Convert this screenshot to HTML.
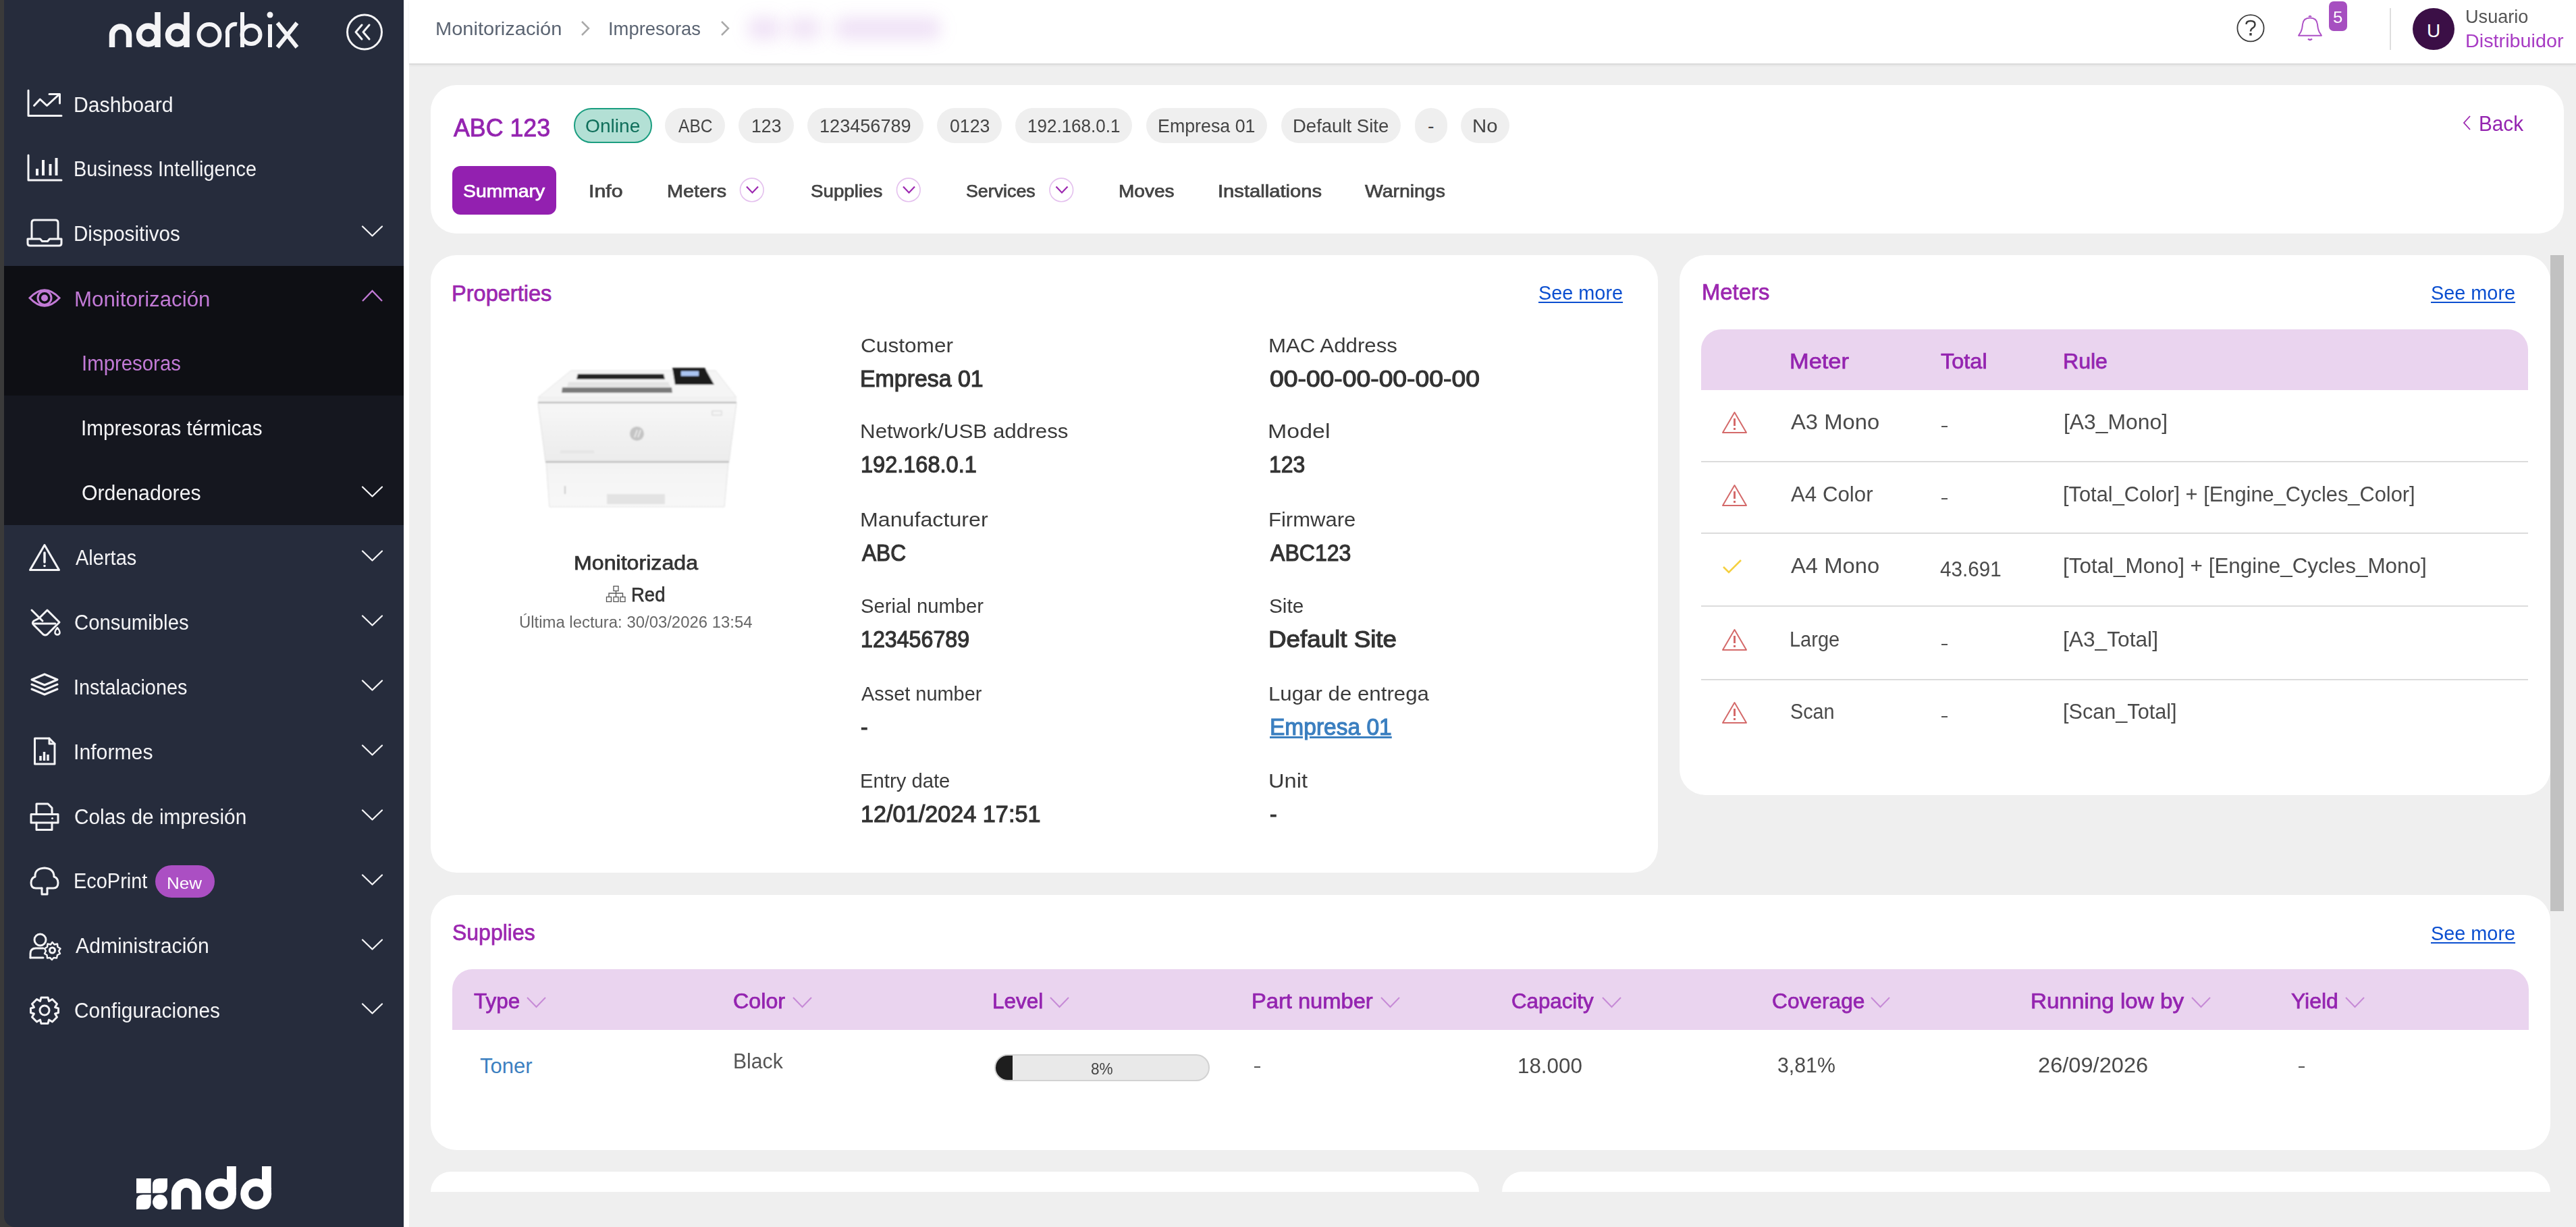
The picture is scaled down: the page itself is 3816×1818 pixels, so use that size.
<!DOCTYPE html>
<html><head><meta charset="utf-8"><style>
*{margin:0;padding:0;box-sizing:border-box}
html,body{width:3816px;height:1818px;overflow:hidden;background:#efefef;font-family:"Liberation Sans", sans-serif}
.t{position:absolute;white-space:nowrap;line-height:1.117;transform-origin:0 0}
.a{position:absolute}
</style></head><body>
<!-- sidebar -->
<div class="a" style="left:0;top:0;width:6px;height:1818px;background:#3a3a3a"></div>
<div class="a" style="left:0;top:1780px;width:40px;height:38px;background:#3a3a3a"></div>
<div class="a" style="left:6px;top:0;width:592px;height:1818px;background:#262c3c;border-bottom-left-radius:16px"></div>
<div class="a" style="left:6px;top:394px;width:592px;height:192px;background:#0e0f14"></div>
<div class="a" style="left:6px;top:586px;width:592px;height:192px;background:#15171f"></div>
<div class="a" style="left:598px;top:0;width:8px;height:1818px;background:#ffffff"></div>
<div class="a" style="left:230px;top:1282px;width:88px;height:48px;background:#ab4fc3;border-radius:24px"></div>
<!-- header -->
<div class="a" style="left:606px;top:0;width:3210px;height:94px;background:#fff;box-shadow:0 1.5px 0 #d6d6d6,0 3px 4px rgba(0,0,0,0.06)"></div>
<div class="a" style="left:1108px;top:26px;width:48px;height:32px;background:rgba(160,80,200,0.17);filter:blur(12px);border-radius:12px"></div>
<div class="a" style="left:1167px;top:26px;width:49px;height:32px;background:rgba(160,80,200,0.16);filter:blur(12px);border-radius:12px"></div>
<div class="a" style="left:1237px;top:26px;width:156px;height:32px;background:rgba(160,80,200,0.17);filter:blur(12px);border-radius:12px"></div>
<div class="a" style="left:3450px;top:2px;width:27px;height:44px;background:#a64fc0;border-radius:7px"></div>
<div class="a" style="left:3540px;top:12px;width:2px;height:62px;background:#dedede"></div>
<div class="a" style="left:3574px;top:12px;width:62px;height:62px;background:#3b0f46;border-radius:50%"></div>
<!-- cards -->
<div class="a" style="left:638px;top:126px;width:3160px;height:220px;background:#fff;border-radius:38px"></div>
<div class="a" style="left:638px;top:378px;width:1818px;height:915px;background:#fff;border-radius:38px"></div>
<div class="a" style="left:2488px;top:378px;width:1290px;height:800px;background:#fff;border-radius:38px"></div>
<div class="a" style="left:638px;top:1326px;width:3140px;height:378px;background:#fff;border-radius:38px"></div>
<div class="a" style="left:638px;top:1736px;width:1553px;height:30px;background:#fff;border-radius:40px 40px 0 0"></div>
<div class="a" style="left:2225px;top:1736px;width:1553px;height:30px;background:#fff;border-radius:40px 40px 0 0"></div>
<div class="a" style="left:3778px;top:378px;width:20px;height:972px;background:#c1c1c1"></div>
<!-- header card pills -->
<div class="a" style="left:850px;top:160px;width:116px;height:52px;background:#b3e0d5;border:2px solid #1b9e80;border-radius:26px"></div>
<div class="a" style="left:985px;top:160px;width:89px;height:52px;background:#efefef;border-radius:26px"></div>
<div class="a" style="left:1094px;top:160px;width:82px;height:52px;background:#efefef;border-radius:26px"></div>
<div class="a" style="left:1196px;top:160px;width:172px;height:52px;background:#efefef;border-radius:26px"></div>
<div class="a" style="left:1388px;top:160px;width:96px;height:52px;background:#efefef;border-radius:26px"></div>
<div class="a" style="left:1504px;top:160px;width:173px;height:52px;background:#efefef;border-radius:26px"></div>
<div class="a" style="left:1698px;top:160px;width:179px;height:52px;background:#efefef;border-radius:26px"></div>
<div class="a" style="left:1898px;top:160px;width:177px;height:52px;background:#efefef;border-radius:26px"></div>
<div class="a" style="left:2096px;top:160px;width:48px;height:52px;background:#efefef;border-radius:26px"></div>
<div class="a" style="left:2164px;top:160px;width:72px;height:52px;background:#efefef;border-radius:26px"></div>
<div class="a" style="left:670px;top:246px;width:154px;height:72px;background:#9320b0;border-radius:12px"></div>
<!-- meters table -->
<div class="a" style="left:2520px;top:488px;width:1225px;height:90px;background:#ead4ef;border-radius:30px 30px 0 0"></div>
<div class="a" style="left:2520px;top:683px;width:1225px;height:2px;background:#dcdcdc"></div>
<div class="a" style="left:2520px;top:789px;width:1225px;height:2px;background:#dcdcdc"></div>
<div class="a" style="left:2520px;top:897px;width:1225px;height:2px;background:#dcdcdc"></div>
<div class="a" style="left:2520px;top:1006px;width:1225px;height:2px;background:#dcdcdc"></div>
<div class="a" style="left:2876px;top:631px;width:9px;height:2px;background:#555"></div>
<div class="a" style="left:2876px;top:738px;width:9px;height:2px;background:#555"></div>
<div class="a" style="left:2876px;top:953.5px;width:9px;height:2px;background:#555"></div>
<div class="a" style="left:2876px;top:1061px;width:9px;height:2px;background:#555"></div>
<div class="a" style="left:1858px;top:1579.5px;width:8.5px;height:2px;background:#555"></div>
<div class="a" style="left:3404.5px;top:1579.5px;width:9px;height:2px;background:#555"></div>
<!-- supplies table -->
<div class="a" style="left:670px;top:1436px;width:3076px;height:90px;background:#ead4ef;border-radius:30px 30px 0 0"></div>
<div class="a" style="left:1473px;top:1562px;width:319px;height:40px;background:#e9e9e9;border:2px solid #d2d2d2;border-radius:20px;overflow:hidden"><div style="position:absolute;left:-2px;top:-1px;width:27px;height:40px;background:#1e1e1e"></div></div>

<svg class="a" style="left:0;top:0" width="3816" height="1818" viewBox="0 0 3816 1818">
<g fill="none" stroke="#f4f4f6" stroke-width="3" stroke-linecap="round" stroke-linejoin="round">
 <!-- logo ndd (bold) -->
 <g stroke-width="8.5" stroke-linecap="butt">
  <path d="M166 70 V52 A12.5 12.5 0 0 1 191 52 V70"/>
  <circle cx="219.5" cy="52" r="13.5"/><path d="M233.5 18 V70"/>
  <circle cx="262.5" cy="52" r="13.5"/><path d="M276.5 18 V70"/>
 </g>
 <g stroke-width="6" stroke-linecap="butt">
  <circle cx="310" cy="51.5" r="15.5"/>
  <path d="M337 70 V50 A12 12 0 0 1 351 36"/>
  <path d="M359 18 V70"/><circle cx="372" cy="51.5" r="13.5"/>
  <path d="M400 36 V70"/>
  <path d="M411 34 L440 70 M440 34 L411 70"/>
 </g>
 <circle cx="400" cy="22" r="4.5" fill="#f4f4f6" stroke="none"/>
 <!-- collapse -->
 <circle cx="540" cy="47.5" r="25.5" stroke-width="3"/>
 <path d="M536 37 L527 47.5 L536 58 M547 37 L538 47.5 L547 58" stroke-width="3"/>
 <!-- dashboard -->
 <path d="M42 134 V171.5 H91"/>
 <path d="M50.5 156.5 L59.3 147 L69.5 156.5 L88 139.5"/>
 <path d="M73 139.5 H88.5 V153"/>
 <!-- BI -->
 <path d="M42 230 V267 H91"/>
 <path d="M55 250 V260 M64 237 V260 M74.5 243 V260 M83.5 234 V260" stroke-width="4" stroke-linecap="butt"/>
 <!-- laptop -->
 <path d="M47 353 V330 Q47 326 51 326 H82 Q86 326 86 330 V353"/>
 <path d="M41 354 H59.5 L62.5 357.5 H70.5 L73.5 354 H91 V360.5 Q91 364 87.5 364 H44.5 Q41 364 41 360.5 Z"/>
 <!-- chevrons down -->
 <path d="M537 335.5 L551.5 349.5 L566 335.5" stroke-width="2.3"/>
 <path d="M547 720 L560 733 L573 720" stroke-width="0"/>
 <path d="M537 721.5 L551.5 735.5 L566 721.5" stroke-width="2.3"/>
 <path d="M537 816.5 L551.5 830.5 L566 816.5" stroke-width="2.3"/>
 <path d="M537 912.5 L551.5 926.5 L566 912.5" stroke-width="2.3"/>
 <path d="M537 1008.5 L551.5 1022.5 L566 1008.5" stroke-width="2.3"/>
 <path d="M537 1104.5 L551.5 1118.5 L566 1104.5" stroke-width="2.3"/>
 <path d="M537 1200.5 L551.5 1214.5 L566 1200.5" stroke-width="2.3"/>
 <path d="M537 1296.5 L551.5 1310.5 L566 1296.5" stroke-width="2.3"/>
 <path d="M537 1392.5 L551.5 1406.5 L566 1392.5" stroke-width="2.3"/>
 <path d="M537 1487.5 L551.5 1501.5 L566 1487.5" stroke-width="2.3"/>
 <!-- alert -->
 <path d="M66 807.5 L87.5 844.5 H44.5 Z" stroke-width="3"/>
 <path d="M66 819 V833" stroke-width="3.5"/><circle cx="66" cy="838.5" r="1.8" fill="#f4f4f6" stroke="none"/>
 <!-- consumibles: tilted bucket -->
 <path d="M58 916 L70 904 L88 922 L70 940 Q67 942 64 940 L50 926 Q47 923 50 920 Z"/>
 <path d="M49 924 H82"/>
 <path d="M47 904 L63 920"/>
 <path d="M85 930 Q80 936 82 939 Q85 942 88 939 Q90 936 85 930 Z" stroke-width="2.5"/>
 <!-- layers -->
 <path d="M66 999 L85 1007 L66 1015 L47 1007 Z"/>
 <path d="M47 1014 L66 1022 L85 1014"/>
 <path d="M47 1021 L66 1029 L85 1021"/>
 <!-- informes doc -->
 <path d="M51.5 1094 H73 L81 1102 V1132 H51.5 Z"/>
 <path d="M73 1094 V1102 H81"/>
 <path d="M60 1127 V1120 M65.5 1127 V1114 M71 1127 V1118" stroke-width="3.5" stroke-linecap="butt"/>
 <!-- printer -->
 <path d="M54 1206 V1191 H71 L77 1197 V1206"/>
 <path d="M46 1206.5 H86 V1219 H46 Z"/>
 <path d="M54 1219 V1229.5 H77 V1219"/>
 <circle cx="77.5" cy="1212.5" r="1.6" fill="#f4f4f6" stroke="none"/>
 <!-- tree -->
 <path d="M62 1316 H53 Q46 1316 46 1308 Q46 1301 52 1299 Q51 1287 66 1286 Q80 1287 80 1299 Q86 1301 86 1308 Q86 1316 79 1316 H70"/>
 <path d="M62 1316 V1325 H70 V1316"/>
 <!-- admin -->
 <circle cx="59.5" cy="1392.5" r="8.5"/>
 <path d="M45 1419 V1413 Q45 1405 53 1405 H64"/>
 <path d="M45 1419 H64"/>
 <circle cx="77.5" cy="1408" r="4"/>
 <path d="M77.5 1396 L80.5 1399.5 L85 1398.5 L85.5 1403 L89.5 1405.5 L87 1409 L89 1413 L85 1415 L84 1419.5 L79.5 1419 L77 1422 L74 1419 L70 1419.5 L69.5 1415 L66 1413 L68 1409 L66 1405.5 L70 1403 L70.5 1398.5 L75 1399.5 Z" stroke-width="2.5"/>
 <!-- config gear -->
 <circle cx="66" cy="1497" r="7"/>
 <path d="M61 1478 H71 L72.5 1483.5 L77.5 1480.5 L84.5 1487.5 L81.5 1492.5 L86.5 1494 V1500.5 L81.5 1502 L84.5 1507 L77.5 1514 L72.5 1511 L71 1516.5 H61 L59.5 1511 L54.5 1514 L47.5 1507 L50.5 1502 L45.5 1500.5 V1494 L50.5 1492.5 L47.5 1487.5 L54.5 1480.5 L59.5 1483.5 Z" stroke-width="3"/>
</g>
<!-- eye -->
<g fill="none" stroke="#c27ad6" stroke-width="3">
 <path d="M44 441.5 Q66 418 88 441.5 Q66 465 44 441.5 Z"/>
 <circle cx="66" cy="441.5" r="10"/>
 <circle cx="66" cy="441.5" r="5" fill="#c27ad6" stroke="none"/>
 <path d="M537 446 L551.5 431 L566 446" stroke-width="2.3"/>
</g>
<!-- bottom ndd logo -->
<g fill="#fff">
 <rect x="202" y="1746" width="21.7" height="21.8"/>
 <path d="M226 1767.8 V1756 Q226 1746 236 1746 H248 V1757.8 Q248 1767.8 238 1767.8 Z"/>
 <path d="M202 1792 V1780 Q202 1770 212 1770 H223.7 V1782 Q223.7 1792 213.7 1792 Z"/>
 <circle cx="237" cy="1781" r="11"/>
 <path d="M254 1792 V1768 A22 22 0 0 1 298 1768 V1792 H284.3 V1768 A8.15 8.15 0 0 0 268 1768 V1792 Z"/>
 <rect x="336" y="1728" width="13.8" height="34"/><rect x="338.5" y="1760" width="11.3" height="10"/>
 <rect x="388" y="1728" width="13.8" height="34"/><rect x="390.5" y="1760" width="11.3" height="10"/>
</g>
<g fill="none" stroke="#fff" stroke-width="12">
 <circle cx="327" cy="1769" r="17"/>
 <circle cx="379.2" cy="1769" r="17"/>
</g>
<!-- header icons -->
<g fill="none" stroke="#3a3a3a" stroke-width="1.8">
 <circle cx="3334" cy="41.8" r="19.6"/>
 <path d="M3327.5 36 Q3327.5 31 3334 31 Q3340.5 31 3340.5 36 Q3340.5 39.5 3337 41.5 Q3334 43.5 3334 46.5" stroke-width="2.4"/>
</g>
<rect x="3332.3" y="49" width="3.4" height="3.6" fill="#3a3a3a"/>
<g fill="none" stroke="#ad4fc6" stroke-width="1.9" stroke-linejoin="round">
 <path d="M3405 52.8 H3439 L3435.5 47 Q3433.5 43 3433 36 Q3432 26.5 3422 26.5 Q3412 26.5 3411 36 Q3410.5 43 3408.5 47 Z"/>
 <path d="M3419 57.5 Q3422 60.5 3425 57.5" stroke-width="2.2"/>
 <path d="M3420 25 Q3422 22.5 3424 25"/>
</g>
<!-- breadcrumb chevrons -->
<g fill="none" stroke="#a9a9a9" stroke-width="2.5">
 <path d="M862 32 L872 42 L862 52"/>
 <path d="M1069 32 L1079 42 L1069 52"/>
</g>
<!-- tab chevron circles -->
<g fill="none" stroke="#e4c0ee" stroke-width="1.6">
 <circle cx="1113.8" cy="281.4" r="17.3"/>
 <circle cx="1345.8" cy="281.4" r="17.3"/>
 <circle cx="1572.3" cy="281.4" r="17.3"/>
</g>
<g fill="none" stroke="#9c27b0" stroke-width="2.2">
 <path d="M1106 276.5 L1114.5 285.5 L1123 276.5"/>
 <path d="M1338 276.5 L1346.5 285.5 L1355 276.5"/>
 <path d="M1564.5 276.5 L1573 285.5 L1581.5 276.5"/>
 <path d="M3659 172 L3650 182 L3659 192" stroke-width="1.8"/>
</g>
<!-- supplies header chevrons -->
<g fill="none" stroke="#c68ad6" stroke-width="2">
 <path d="M781 1478 L794.5 1492 L808 1478"/>
 <path d="M1175 1478 L1188.5 1492 L1202 1478"/>
 <path d="M1556 1478 L1569.5 1492 L1583 1478"/>
 <path d="M2046 1478 L2059.5 1492 L2073 1478"/>
 <path d="M2374 1478 L2387.5 1492 L2401 1478"/>
 <path d="M2772 1478 L2785.5 1492 L2799 1478"/>
 <path d="M3247 1478 L3260.5 1492 L3274 1478"/>
 <path d="M3475 1478 L3488.5 1492 L3502 1478"/>
</g>
<!-- meter row icons -->
<g fill="none" stroke="#d46a6a" stroke-width="2" stroke-linejoin="round">
 <path d="M2569.5 611 L2587 641 H2552 Z"/>
 <path d="M2569.5 719 L2587 749 H2552 Z"/>
 <path d="M2569.5 933 L2587 963 H2552 Z"/>
 <path d="M2569.5 1041 L2587 1071 H2552 Z"/>
</g>
<g fill="#d46a6a">
 <rect x="2568" y="620" width="3" height="11"/><rect x="2568" y="634" width="3" height="3"/>
 <rect x="2568" y="728" width="3" height="11"/><rect x="2568" y="742" width="3" height="3"/>
 <rect x="2568" y="942" width="3" height="11"/><rect x="2568" y="956" width="3" height="3"/>
 <rect x="2568" y="1050" width="3" height="11"/><rect x="2568" y="1064" width="3" height="3"/>
</g>
<path d="M2553 840 L2561 848 L2579 830" fill="none" stroke="#f5d040" stroke-width="2.6"/>

<!-- printer image -->
<defs><filter id="pb" x="-5%" y="-5%" width="110%" height="110%"><feGaussianBlur stdDeviation="0.9"/></filter>
<linearGradient id="pg1" x1="0" y1="0" x2="0" y2="1"><stop offset="0" stop-color="#f7f7f7"/><stop offset="1" stop-color="#ececec"/></linearGradient>
<linearGradient id="pg2" x1="0" y1="0" x2="0" y2="1"><stop offset="0" stop-color="#f3f3f3"/><stop offset="1" stop-color="#f8f8f8"/></linearGradient></defs>
<g filter="url(#pb)">
 <path d="M846 549 H1000 L1060 549 L1091 589 H797 Z" fill="#f5f5f5" stroke="#e2e2e2" stroke-width="1"/>
 <path d="M856 554 H983 L985 562 H854 Z" fill="#222"/>
 <path d="M842 566 H990 L993 573 H840 Z" fill="#e4e4e4"/>
 <path d="M833 574 H995 L996 582 H832 Z" fill="#7a7a7a"/>
 <path d="M996 545 H1044 L1058 570 H1000 Z" fill="#1a1a1a"/>
 <rect x="1009" y="550" width="26" height="7" fill="#aac4f2"/>
 <path d="M797 589 H1091 V597 H797 Z" fill="#f2f2f2"/>
 <path d="M797 596.5 H1091" stroke="#9a9a9a" stroke-width="1.6"/>
 <path d="M797 597.5 H1091 L1080 683 H808 Z" fill="url(#pg1)" stroke="#dedede" stroke-width="1"/>
 <path d="M808 684.5 H1080" stroke="#9a9a9a" stroke-width="1.6"/>
 <path d="M809 685.5 H1079 L1073 751 H814 Z" fill="url(#pg2)" stroke="#e0e0e0" stroke-width="1"/>
 <rect x="899" y="732" width="86" height="15" fill="#e3e3e3"/>
 <circle cx="943.5" cy="642.5" r="10.5" fill="#c4c4c4"/>
 <path d="M940 648 L944 637 M945 648 L949 637" stroke="#f2f2f2" stroke-width="1.6"/>
 <rect x="1055" y="609" width="14" height="6" fill="none" stroke="#d0d0d0" stroke-width="1"/>
 <rect x="830" y="667" width="50" height="5" fill="#e6e6e6"/>
 <rect x="836" y="720" width="2" height="12" fill="#c8c8c8"/>
</g>
<!-- network icon -->
<g fill="none" stroke="#555" stroke-width="1.3">
 <rect x="909" y="868.5" width="7" height="7"/>
 <path d="M912.5 875.5 V879 M902 885 V879 H922.5 V885 M912.5 879 V885"/>
 <rect x="898.5" y="884.5" width="7" height="7"/><rect x="909" y="884.5" width="7" height="7"/><rect x="919" y="884.5" width="7" height="7"/>
</g>
</svg>

<div class="t" id="sb0" style="left:109.0px;top:138.6px;font-size:31px;font-weight:400;color:#f4f4f6;transform:scaleX(0.9732);">Dashboard</div><div class="t" id="sb1" style="left:109.0px;top:234.2px;font-size:31px;font-weight:400;color:#f4f4f6;transform:scaleX(0.9308);">Business Intelligence</div><div class="t" id="sb2" style="left:109.0px;top:329.6px;font-size:31px;font-weight:400;color:#f4f4f6;transform:scaleX(0.9540);">Dispositivos</div><div class="t" id="sbmon" style="left:109.5px;top:426.6px;font-size:31px;font-weight:400;color:#c27ad6;transform:scaleX(1.0077);">Monitorización</div><div class="t" id="sbimp" style="left:120.7px;top:522.1px;font-size:31px;font-weight:400;color:#c27ad6;transform:scaleX(0.9477);">Impresoras</div><div class="t" id="sbimpt" style="left:120.0px;top:617.6px;font-size:31px;font-weight:400;color:#f4f4f6;transform:scaleX(0.9568);">Impresoras térmicas</div><div class="t" id="sbord" style="left:121.0px;top:714.1px;font-size:31px;font-weight:400;color:#f4f4f6;transform:scaleX(0.9761);">Ordenadores</div><div class="t" id="sbl0" style="left:111.8px;top:810.2px;font-size:31px;font-weight:400;color:#f4f4f6;transform:scaleX(0.9361);">Alertas</div><div class="t" id="sbl1" style="left:110.0px;top:906.1px;font-size:31px;font-weight:400;color:#f4f4f6;transform:scaleX(0.9466);">Consumibles</div><div class="t" id="sbl2" style="left:109.2px;top:1002.0px;font-size:31px;font-weight:400;color:#f4f4f6;transform:scaleX(0.9307);">Instalaciones</div><div class="t" id="sbl3" style="left:109.0px;top:1097.6px;font-size:31px;font-weight:400;color:#f4f4f6;transform:scaleX(0.9746);">Informes</div><div class="t" id="sbl4" style="left:110.0px;top:1193.6px;font-size:31px;font-weight:400;color:#f4f4f6;transform:scaleX(0.9620);">Colas de impresión</div><div class="t" id="sbl5" style="left:109.0px;top:1289.4px;font-size:31px;font-weight:400;color:#f4f4f6;transform:scaleX(0.9336);">EcoPrint</div><div class="t" id="sbl6" style="left:112.0px;top:1385.2px;font-size:31px;font-weight:400;color:#f4f4f6;transform:scaleX(0.9734);">Administración</div><div class="t" id="sbl7" style="left:110.0px;top:1481.0px;font-size:31px;font-weight:400;color:#f4f4f6;transform:scaleX(0.9641);">Configuraciones</div><div class="t" id="new" style="left:247.0px;top:1294.5px;font-size:24.5px;font-weight:400;color:#fff;transform:scaleX(1.0625);">New</div><div class="t" id="bc1" style="left:644.5px;top:26.9px;font-size:28.5px;font-weight:400;color:#5b6472;transform:scaleX(1.0193);">Monitorización</div><div class="t" id="bc2" style="left:901.4px;top:26.9px;font-size:28.5px;font-weight:400;color:#5b6472;transform:scaleX(0.9614);">Impresoras</div><div class="t" id="usr" style="left:3651.7px;top:9.4px;font-size:28px;font-weight:400;color:#555;transform:scaleX(0.9684);">Usuario</div><div class="t" id="dist" style="left:3651.6px;top:45.4px;font-size:28px;font-weight:400;color:#a83cc4;transform:scaleX(1.0286);">Distribuidor</div><div class="t" id="avU" style="left:3595.1px;top:30.4px;font-size:28px;font-weight:400;color:#fff;transform:scaleX(1.0000);">U</div><div class="t" id="b5" style="left:3456.1px;top:13.0px;font-size:24px;font-weight:400;color:#fff;transform:scaleX(1.0769);">5</div><div class="t" id="title" style="left:671.6px;top:168.8px;font-size:37px;font-weight:400;-webkit-text-stroke:0.9px #9424b0;color:#9424b0;transform:scaleX(0.9664);">ABC 123</div><div class="t" id="pill0" style="left:867.0px;top:171.1px;font-size:28.5px;font-weight:400;color:#0f6e5a;transform:scaleX(0.9877);">Online</div><div class="t" id="pill1" style="left:1005.1px;top:171.1px;font-size:28.5px;font-weight:400;color:#444;transform:scaleX(0.8621);">ABC</div><div class="t" id="pill2" style="left:1112.5px;top:171.1px;font-size:28.5px;font-weight:400;color:#444;transform:scaleX(0.9348);">123</div><div class="t" id="pill3" style="left:1214.0px;top:171.1px;font-size:28.5px;font-weight:400;color:#444;transform:scaleX(0.9504);">123456789</div><div class="t" id="pill4" style="left:1406.5px;top:171.1px;font-size:28.5px;font-weight:400;color:#444;transform:scaleX(0.9365);">0123</div><div class="t" id="pill5" style="left:1521.5px;top:171.1px;font-size:28.5px;font-weight:400;color:#444;transform:scaleX(0.9128);">192.168.0.1</div><div class="t" id="pill6" style="left:1714.5px;top:171.1px;font-size:28.5px;font-weight:400;color:#444;transform:scaleX(0.9404);">Empresa 01</div><div class="t" id="pill7" style="left:1915.0px;top:171.1px;font-size:28.5px;font-weight:400;color:#444;transform:scaleX(0.9655);">Default Site</div><div class="t" id="pill8" style="left:2115.0px;top:171.1px;font-size:28.5px;font-weight:400;color:#444;transform:scaleX(1.0000);">-</div><div class="t" id="pill9" style="left:2180.8px;top:171.1px;font-size:28.5px;font-weight:400;color:#444;transform:scaleX(1.0286);">No</div><div class="t" id="tab0" style="left:685.5px;top:269.0px;font-size:26px;font-weight:400;-webkit-text-stroke:0.75px #fff;color:#fff;transform:scaleX(1.0893);">Summary</div><div class="t" id="tab1" style="left:871.7px;top:269.0px;font-size:26px;font-weight:400;-webkit-text-stroke:0.75px #444;color:#444;transform:scaleX(1.1667);">Info</div><div class="t" id="tab2" style="left:988.4px;top:269.0px;font-size:26px;font-weight:400;-webkit-text-stroke:0.75px #444;color:#444;transform:scaleX(1.1090);">Meters</div><div class="t" id="tab3" style="left:1200.7px;top:269.0px;font-size:26px;font-weight:400;-webkit-text-stroke:0.75px #444;color:#444;transform:scaleX(1.0660);">Supplies</div><div class="t" id="tab4" style="left:1431.0px;top:269.0px;font-size:26px;font-weight:400;-webkit-text-stroke:0.75px #444;color:#444;transform:scaleX(1.0300);">Services</div><div class="t" id="tab5" style="left:1657.0px;top:269.0px;font-size:26px;font-weight:400;-webkit-text-stroke:0.75px #444;color:#444;transform:scaleX(1.0789);">Moves</div><div class="t" id="tab6" style="left:1803.8px;top:269.0px;font-size:26px;font-weight:400;-webkit-text-stroke:0.75px #444;color:#444;transform:scaleX(1.1221);">Installations</div><div class="t" id="tab7" style="left:2022.4px;top:269.0px;font-size:26px;font-weight:400;-webkit-text-stroke:0.75px #444;color:#444;transform:scaleX(1.0917);">Warnings</div><div class="t" id="back" style="left:3671.6px;top:165.7px;font-size:32px;font-weight:400;color:#9424b0;transform:scaleX(0.9275);">Back</div><div class="t" id="pt" style="left:669.1px;top:416.9px;font-size:32.5px;font-weight:400;-webkit-text-stroke:0.75px #9c27b0;color:#9c27b0;transform:scaleX(1.0000);">Properties</div><div class="t" id="psm" style="left:2279.0px;top:416.6px;font-size:30px;font-weight:400;color:#0b4fd0;text-decoration:underline;text-decoration-thickness:2px;text-underline-offset:3px;transform:scaleX(0.9615);">See more</div><div class="t" id="mon" style="left:849.8px;top:818.0px;font-size:29px;font-weight:400;-webkit-text-stroke:0.75px #333;color:#333;transform:scaleX(1.1084);">Monitorizada</div><div class="t" id="red" style="left:934.5px;top:865.3px;font-size:29.5px;font-weight:400;-webkit-text-stroke:0.75px #333;color:#333;transform:scaleX(0.9327);">Red</div><div class="t" id="ult" style="left:769.1px;top:909.6px;font-size:23px;font-weight:400;color:#666;transform:scaleX(1.0393);">Última lectura: 30/03/2026 13:54</div><div class="t" id="l0" style="left:1274.6px;top:496.5px;font-size:28.6px;font-weight:400;color:#3a3a3a;transform:scaleX(1.1057);">Customer</div><div class="t" id="v0" style="left:1274.0px;top:540.7px;font-size:35px;font-weight:400;-webkit-text-stroke:1.2px #333;color:#333;transform:scaleX(0.9679);">Empresa 01</div><div class="t" id="l1" style="left:1273.9px;top:624.2px;font-size:28.6px;font-weight:400;color:#3a3a3a;transform:scaleX(1.0968);">Network/USB address</div><div class="t" id="v1" style="left:1274.7px;top:668.4px;font-size:35px;font-weight:400;-webkit-text-stroke:1.2px #333;color:#333;transform:scaleX(0.9290);">192.168.0.1</div><div class="t" id="l2" style="left:1273.7px;top:754.8px;font-size:28.6px;font-weight:400;color:#3a3a3a;transform:scaleX(1.1257);">Manufacturer</div><div class="t" id="v2" style="left:1276.9px;top:799.0px;font-size:35px;font-weight:400;-webkit-text-stroke:1.2px #333;color:#333;transform:scaleX(0.9041);">ABC</div><div class="t" id="l3" style="left:1274.7px;top:882.8px;font-size:28.6px;font-weight:400;color:#3a3a3a;transform:scaleX(1.0226);">Serial number</div><div class="t" id="v3" style="left:1274.7px;top:927.0px;font-size:35px;font-weight:400;-webkit-text-stroke:1.2px #333;color:#333;transform:scaleX(0.9195);">123456789</div><div class="t" id="l4" style="left:1275.7px;top:1012.6px;font-size:28.6px;font-weight:400;color:#3a3a3a;transform:scaleX(1.0113);">Asset number</div><div class="t" id="v4" style="left:1275.2px;top:1056.8px;font-size:35px;font-weight:400;-webkit-text-stroke:1.2px #333;color:#333;transform:scaleX(0.9091);">-</div><div class="t" id="l5" style="left:1274.4px;top:1141.6px;font-size:28.6px;font-weight:400;color:#3a3a3a;transform:scaleX(1.0234);">Entry date</div><div class="t" id="v5" style="left:1274.7px;top:1185.8px;font-size:35px;font-weight:400;-webkit-text-stroke:1.2px #333;color:#333;transform:scaleX(0.9779);">12/01/2024 17:51</div><div class="t" id="m0" style="left:1879.1px;top:496.5px;font-size:28.6px;font-weight:400;color:#3a3a3a;transform:scaleX(1.0925);">MAC Address</div><div class="t" id="mv0" style="left:1880.5px;top:540.7px;font-size:35px;font-weight:400;-webkit-text-stroke:1.2px #333;color:#333;transform:scaleX(1.0651);">00-00-00-00-00-00</div><div class="t" id="m1" style="left:1878.1px;top:624.2px;font-size:28.6px;font-weight:400;color:#3a3a3a;transform:scaleX(1.1867);">Model</div><div class="t" id="mv1" style="left:1879.6px;top:668.4px;font-size:35px;font-weight:400;-webkit-text-stroke:1.2px #333;color:#333;transform:scaleX(0.9123);">123</div><div class="t" id="m2" style="left:1879.3px;top:754.8px;font-size:28.6px;font-weight:400;color:#3a3a3a;transform:scaleX(1.0855);">Firmware</div><div class="t" id="mv2" style="left:1881.7px;top:799.0px;font-size:35px;font-weight:400;-webkit-text-stroke:1.2px #333;color:#333;transform:scaleX(0.9160);">ABC123</div><div class="t" id="m3" style="left:1879.6px;top:882.8px;font-size:28.6px;font-weight:400;color:#3a3a3a;transform:scaleX(1.0417);">Site</div><div class="t" id="mv3" style="left:1878.7px;top:927.0px;font-size:35px;font-weight:400;-webkit-text-stroke:1.2px #333;color:#333;transform:scaleX(1.0503);">Default Site</div><div class="t" id="m4" style="left:1879.1px;top:1012.6px;font-size:28.6px;font-weight:400;color:#3a3a3a;transform:scaleX(1.0922);">Lugar de entrega</div><div class="t" id="mv4" style="left:1881.4px;top:1056.8px;font-size:35px;font-weight:400;-webkit-text-stroke:1.2px #3b7fc0;color:#3b7fc0;text-decoration:underline;transform:scaleX(0.9579);">Empresa 01</div><div class="t" id="m5" style="left:1878.9px;top:1141.6px;font-size:28.6px;font-weight:400;color:#3a3a3a;transform:scaleX(1.1400);">Unit</div><div class="t" id="mv5" style="left:1880.7px;top:1185.8px;font-size:35px;font-weight:400;-webkit-text-stroke:1.2px #333;color:#333;transform:scaleX(0.9091);">-</div><div class="t" id="mt" style="left:2520.5px;top:415.3px;font-size:32.5px;font-weight:400;-webkit-text-stroke:0.75px #9c27b0;color:#9c27b0;transform:scaleX(1.0102);">Meters</div><div class="t" id="msm" style="left:3601.0px;top:416.6px;font-size:30px;font-weight:400;color:#0b4fd0;text-decoration:underline;text-decoration-thickness:2px;text-underline-offset:3px;transform:scaleX(0.9615);">See more</div><div class="t" id="mh1" style="left:2651.1px;top:517.7px;font-size:32px;font-weight:400;-webkit-text-stroke:0.75px #9424b0;color:#9424b0;transform:scaleX(1.0750);">Meter</div><div class="t" id="mh2" style="left:2875.0px;top:517.7px;font-size:32px;font-weight:400;-webkit-text-stroke:0.75px #9424b0;color:#9424b0;transform:scaleX(1.0152);">Total</div><div class="t" id="mh3" style="left:3056.1px;top:517.7px;font-size:32px;font-weight:400;-webkit-text-stroke:0.75px #9424b0;color:#9424b0;transform:scaleX(1.0000);">Rule</div><div class="t" id="r0a" style="left:2653.0px;top:609.0px;font-size:31px;font-weight:400;color:#4a4a4a;transform:scaleX(1.0569);">A3 Mono</div><div class="t" id="r0c" style="left:3056.8px;top:609.0px;font-size:31px;font-weight:400;color:#4a4a4a;transform:scaleX(1.0272);">[A3_Mono]</div><div class="t" id="r1a" style="left:2653.0px;top:716.1px;font-size:31px;font-weight:400;color:#4a4a4a;transform:scaleX(1.0083);">A4 Color</div><div class="t" id="r1c" style="left:3056.0px;top:716.1px;font-size:31px;font-weight:400;color:#4a4a4a;transform:scaleX(0.9942);">[Total_Color] + [Engine_Cycles_Color]</div><div class="t" id="r2a" style="left:2653.0px;top:821.6px;font-size:31px;font-weight:400;color:#4a4a4a;transform:scaleX(1.0569);">A4 Mono</div><div class="t" id="r2b" style="left:2873.6px;top:827.1px;font-size:31px;font-weight:400;color:#4a4a4a;transform:scaleX(0.9574);">43.691</div><div class="t" id="r2c" style="left:3056.0px;top:821.6px;font-size:31px;font-weight:400;color:#4a4a4a;transform:scaleX(1.0133);">[Total_Mono] + [Engine_Cycles_Mono]</div><div class="t" id="r3a" style="left:2651.0px;top:930.6px;font-size:31px;font-weight:400;color:#4a4a4a;transform:scaleX(0.9351);">Large</div><div class="t" id="r3c" style="left:3056.0px;top:930.6px;font-size:31px;font-weight:400;color:#4a4a4a;transform:scaleX(1.0224);">[A3_Total]</div><div class="t" id="r4a" style="left:2652.2px;top:1038.1px;font-size:31px;font-weight:400;color:#4a4a4a;transform:scaleX(0.9265);">Scan</div><div class="t" id="r4c" style="left:3056.0px;top:1038.1px;font-size:31px;font-weight:400;color:#4a4a4a;transform:scaleX(0.9880);">[Scan_Total]</div><div class="t" id="st" style="left:669.5px;top:1364.3px;font-size:32.5px;font-weight:400;-webkit-text-stroke:0.75px #9c27b0;color:#9c27b0;transform:scaleX(0.9839);">Supplies</div><div class="t" id="ssm" style="left:3600.6px;top:1366.1px;font-size:30px;font-weight:400;color:#0b4fd0;text-decoration:underline;text-decoration-thickness:2px;text-underline-offset:3px;transform:scaleX(0.9615);">See more</div><div class="t" id="sh0" style="left:702.4px;top:1466.6px;font-size:31px;font-weight:400;-webkit-text-stroke:0.75px #9424b0;color:#9424b0;transform:scaleX(1.0149);">Type</div><div class="t" id="sh1" style="left:1086.0px;top:1466.6px;font-size:31px;font-weight:400;-webkit-text-stroke:0.75px #9424b0;color:#9424b0;transform:scaleX(1.0405);">Color</div><div class="t" id="sh2" style="left:1469.8px;top:1466.6px;font-size:31px;font-weight:400;-webkit-text-stroke:0.75px #9424b0;color:#9424b0;transform:scaleX(1.0141);">Level</div><div class="t" id="sh3" style="left:1854.1px;top:1466.6px;font-size:31px;font-weight:400;-webkit-text-stroke:0.75px #9424b0;color:#9424b0;transform:scaleX(1.0533);">Part number</div><div class="t" id="sh4" style="left:2239.1px;top:1466.6px;font-size:31px;font-weight:400;-webkit-text-stroke:0.75px #9424b0;color:#9424b0;transform:scaleX(1.0083);">Capacity</div><div class="t" id="sh5" style="left:2624.6px;top:1466.6px;font-size:31px;font-weight:400;-webkit-text-stroke:0.75px #9424b0;color:#9424b0;transform:scaleX(1.0226);">Coverage</div><div class="t" id="sh6" style="left:3008.4px;top:1466.6px;font-size:31px;font-weight:400;-webkit-text-stroke:0.75px #9424b0;color:#9424b0;transform:scaleX(1.0711);">Running low by</div><div class="t" id="sh7" style="left:3394.0px;top:1466.6px;font-size:31px;font-weight:400;-webkit-text-stroke:0.75px #9424b0;color:#9424b0;transform:scaleX(1.0299);">Yield</div><div class="t" id="toner" style="left:711.0px;top:1563.0px;font-size:31px;font-weight:400;color:#3b7fc0;transform:scaleX(1.0000);">Toner</div><div class="t" id="black" style="left:1086.0px;top:1556.4px;font-size:31px;font-weight:400;color:#555;transform:scaleX(0.9730);">Black</div><div class="t" id="pct" style="left:1615.5px;top:1570.5px;font-size:24px;font-weight:400;color:#444;transform:scaleX(0.9412);">8%</div><div class="t" id="cap" style="left:2248.0px;top:1562.6px;font-size:31px;font-weight:400;color:#4a4a4a;transform:scaleX(1.0109);">18.000</div><div class="t" id="cov" style="left:2633.0px;top:1561.6px;font-size:31px;font-weight:400;color:#4a4a4a;transform:scaleX(0.9767);">3,81%</div><div class="t" id="run" style="left:3018.6px;top:1561.6px;font-size:31px;font-weight:400;color:#4a4a4a;transform:scaleX(1.0519);">26/09/2026</div>
</body></html>
